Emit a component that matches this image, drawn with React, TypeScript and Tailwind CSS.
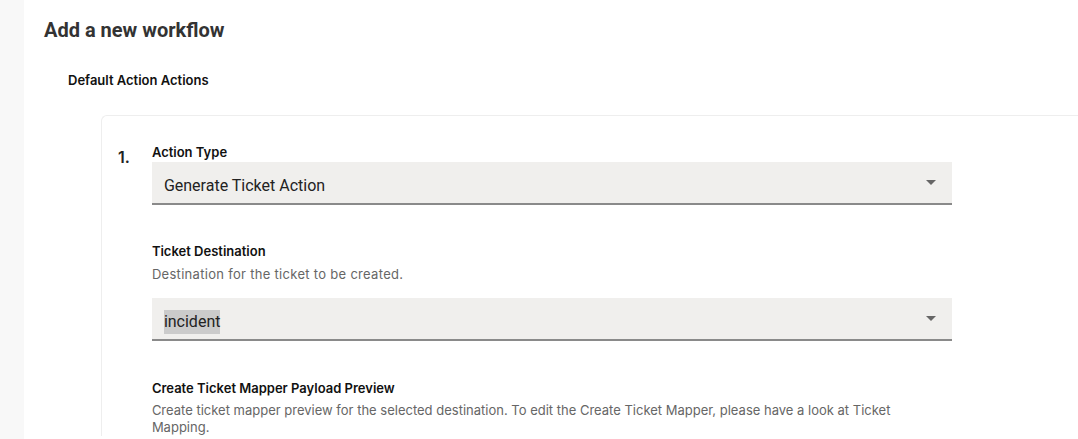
import React from "react";

const SelectBox = ({ value, highlight }: { value: string; highlight?: boolean }) => {
  return (
    <div className="flex h-[43px] w-[800px] items-center justify-between border-b-2 border-[#8a8a8a] bg-[#f0efed] pl-3 pr-4 font-['Roboto',sans-serif] text-[16px] text-[#222]">
      <span className={`mt-[7px] leading-6 ${highlight ? "bg-[#cbcbcb]" : ""}`}>{value}</span>
      <svg width="10" height="5" viewBox="0 0 10 5">
        <path d="M0 0h10L5 5z" fill="#666" />
      </svg>
    </div>
  );
};

const App = () => {
  return (
    <div className="flex h-[439px] w-[1078px] overflow-hidden bg-white font-['Inter',sans-serif]">
      <div className="w-6 shrink-0 bg-[#f8f8f8]" />
      <main className="flex-1 pl-5 pt-[18px]">
        <h1 className="font-['Roboto',sans-serif] text-[20px] font-bold leading-6 text-[#333]">
          Add a new workflow
        </h1>
        <h2 className="mt-[30px] pl-6 text-[13px] font-semibold leading-4 text-[#111]">
          Default Action Actions
        </h2>

        <section className="ml-[57px] mt-[27px] rounded-tl-md border border-r-0 border-b-0 border-[#eeeeee] pl-4 pt-[28px]">
          <div className="flex gap-[22px]">
            <span className="pt-[3px] text-[16px] font-semibold leading-5 text-[#222]">1.</span>
            <div className="flex flex-col">
              <label className="text-[13px] font-semibold leading-4 text-[#111]">Action Type</label>
              <div className="mt-[2px]">
                <SelectBox value="Generate Ticket Action" />
              </div>

              <label className="mt-[38px] text-[13px] font-semibold leading-4 text-[#111]">
                Ticket Destination
              </label>
              <p className="mt-[7px] text-[13px] leading-4 tracking-[0.3px] text-[#666]">
                Destination for the ticket to be created.
              </p>
              <div className="mt-[16px]">
                <SelectBox value="incident" highlight />
              </div>

              <label className="mt-[39px] text-[13px] font-semibold leading-4 text-[#111]">
                Create Ticket Mapper Payload Preview
              </label>
              <p className="mt-[6px] w-[770px] text-[13px] leading-[17px] text-[#666]">
                Create ticket mapper preview for the selected destination. To edit the Create Ticket Mapper, please
                have a look at Ticket Mapping.
              </p>
            </div>
          </div>
        </section>
      </main>
    </div>
  );
};

export default App;
